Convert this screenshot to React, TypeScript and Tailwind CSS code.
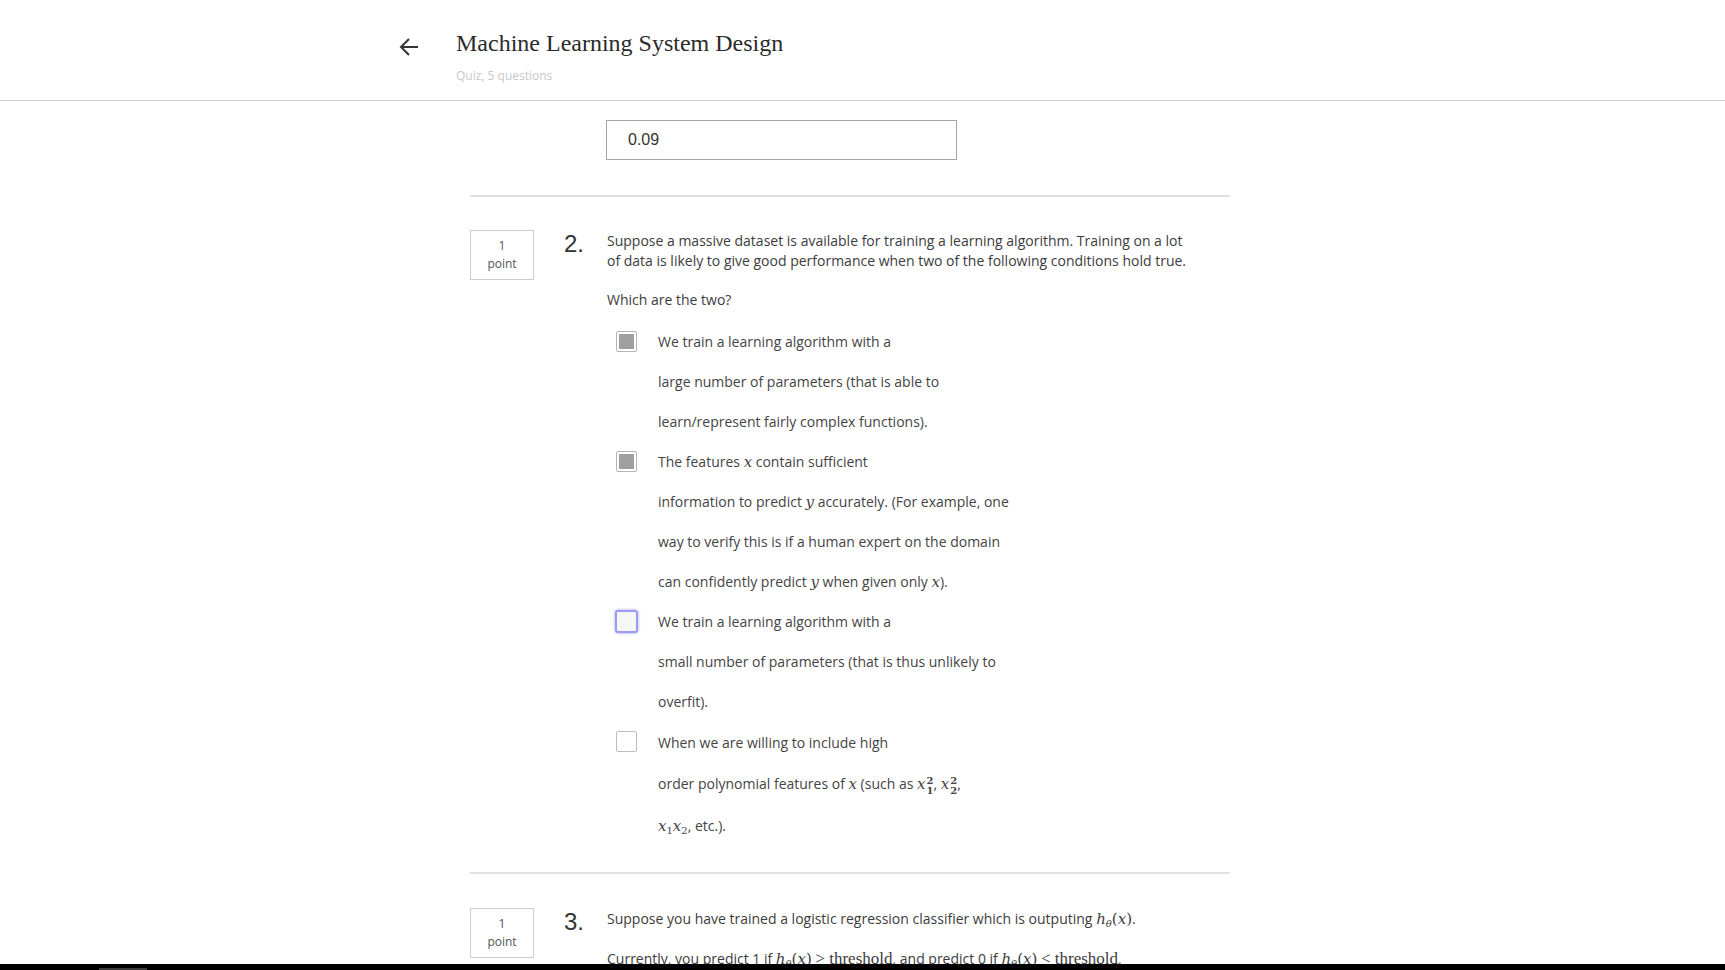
import type { ReactNode } from "react";

const mathFont = "font-['DejaVu_Serif',serif]";

function Tex({ children }: { children: ReactNode }) {
  return <span className={`${mathFont} italic text-[15px] leading-none`}>{children}</span>;
}

function Rm({ children }: { children: ReactNode }) {
  return <span className="font-['Liberation_Serif',serif] text-[17px] leading-none">{children}</span>;
}

function H() {
  return (
    <span className={`${mathFont} text-[15px] leading-none`}>
      <span className="italic">h</span>
      <sub className="italic text-[10px] leading-none">θ</sub>(<span className="italic">x</span>)
    </span>
  );
}

// x with stacked superscript 2 and subscript i
function XSq({ i }: { i: string }) {
  return (
    <span className={`${mathFont} text-[15px] leading-none`}>
      <span className="italic">x</span>
      <span className="inline-flex flex-col align-[5px] text-[10px] leading-[10px] font-bold ml-[1px]">
        <span>2</span>
        <span>{i}</span>
      </span>
    </span>
  );
}

function Checkbox({ state }: { state: "checked" | "focus" | "empty" }) {
  if (state === "checked") {
    return (
      <div className="w-[21px] h-[21px] border border-[#b5b5b5] rounded-[2px] p-[2px] bg-white">
        <div className="w-full h-full bg-[#a0a0a0]" />
      </div>
    );
  }
  if (state === "focus") {
    return (
      <div className="w-[23px] h-[23px] -ml-[1px] -mt-[1px] -mr-[1px] border-2 border-[#9b9bf2] rounded-[3px] bg-[#f6f6f6] shadow-[0_0_3px_rgba(110,110,240,0.7)]" />
    );
  }
  return <div className="w-[21px] h-[21px] border border-[#bdbdbd] rounded-[2px] bg-white" />;
}

function PointBox() {
  return (
    <div className="w-[64px] h-[50px] shrink-0 border border-[#cccccc] pt-[6px] text-center text-[12px] leading-[18px] text-[#555]">
      <div>1</div>
      <div>point</div>
    </div>
  );
}

type Opt = { state: "checked" | "focus" | "empty"; lines: { h?: string; text: ReactNode }[] };

const options: Opt[] = [
  {
    state: "checked",
    lines: [
      { text: "We train a learning algorithm with a" },
      { text: "large number of parameters (that is able to" },
      { text: "learn/represent fairly complex functions)." },
    ],
  },
  {
    state: "checked",
    lines: [
      { text: <>The features <Tex>x</Tex> contain sufficient</> },
      { text: <>information to predict <Tex>y</Tex> accurately. (For example, one</> },
      { text: "way to verify this is if a human expert on the domain" },
      { text: <>can confidently predict <Tex>y</Tex> when given only <Tex>x</Tex>).</> },
    ],
  },
  {
    state: "focus",
    lines: [
      { text: "We train a learning algorithm with a" },
      { text: "small number of parameters (that is thus unlikely to" },
      { text: "overfit)." },
    ],
  },
  {
    state: "empty",
    lines: [
      { h: "h-[42px]", text: "When we are willing to include high" },
      {
        h: "h-[42px]",
        text: (
          <>
            order polynomial features of <Tex>x</Tex> (such as <XSq i="1" />, <XSq i="2" />,
          </>
        ),
      },
      {
        text: (
          <>
            <span className={`${mathFont} text-[15px] leading-none`}>
              <span className="italic">x</span>
              <sub className="text-[10px] leading-none">1</sub>
              <span className="italic">x</span>
              <sub className="text-[10px] leading-none">2</sub>
            </span>
            , etc.).
          </>
        ),
      },
    ],
  },
];

export default function App() {
  return (
    <div className="relative h-[970px] overflow-hidden bg-white font-['Open_Sans',sans-serif]">
      {/* Header */}
      <header className="h-[101px] border-b border-[#cfcfcf] flex items-start pl-[399px]">
        <svg className="mt-[37px]" width="20" height="20" viewBox="0 0 20 20" fill="none" stroke="#333" strokeWidth="2">
          <path d="M19 10H2" />
          <path d="M10 2 2 10l8 8" />
        </svg>
        <div className="ml-[37px] mt-[27px]">
          <h1 className="font-['Liberation_Serif',serif] text-[24px] leading-[32px] text-[#2b2b2b]">
            Machine Learning System Design
          </h1>
          <p className="mt-[9px] text-[12px] leading-[16px] text-[#c8c8c8]">Quiz, 5 questions</p>
        </div>
      </header>

      <div className="ml-[470px] w-[760px] text-[#3c3c3c]">
        {/* end of question 1 */}
        <div className="pl-[136px] pt-[19px]">
          <div className="w-[351px] h-[40px] border border-[#a6a6a6] flex items-center pl-[21px] font-['Liberation_Sans',Arial,sans-serif] text-[16px] text-[#333]">
            0.09
          </div>
        </div>
        <div className="mt-[35px] h-[2px] bg-[#e1e1e1]" />

        {/* Question 2 */}
        <div className="mt-[33px] flex items-start">
          <PointBox />
          <div className="ml-[30px] w-[43px] shrink-0 font-['Liberation_Sans',Arial,sans-serif] text-[24px] leading-[28px] text-[#333]">
            2.
          </div>
          <div className="pt-[1px] text-[14px] leading-[20px]">
            <p className="whitespace-nowrap">
              Suppose a massive dataset is available for training a learning algorithm. Training on a lot
            </p>
            <p className="whitespace-nowrap">
              of data is likely to give good performance when two of the following conditions hold true.
            </p>
            <p className="mt-[19px]">Which are the two?</p>

            <div className="mt-[12px] ml-[9px] text-[#444]">
              {options.map((o, i) => (
                <div key={i} className="flex items-start">
                  <div className="mt-[9px] shrink-0">
                    <Checkbox state={o.state} />
                  </div>
                  <div className="ml-[21px]">
                    {o.lines.map((l, j) => (
                      <div key={j} className={`${l.h ?? "h-[40px]"} flex items-center whitespace-nowrap`}>
                        <span>{l.text}</span>
                      </div>
                    ))}
                  </div>
                </div>
              ))}
            </div>
          </div>
        </div>
        <div className="mt-[26px] h-[2px] bg-[#e1e1e1]" />

        {/* Question 3 */}
        <div className="mt-[34px] flex items-start">
          <PointBox />
          <div className="ml-[30px] w-[43px] shrink-0 font-['Liberation_Sans',Arial,sans-serif] text-[24px] leading-[28px] text-[#333]">
            3.
          </div>
          <div className="pt-[1px] text-[14px] leading-[20px]">
            <p className="whitespace-nowrap">
              Suppose you have trained a logistic regression classifier which is outputing <H />.
            </p>
            <p className="mt-[20px] whitespace-nowrap">
              Currently, you predict 1 if <H /> <Rm>&gt; threshold</Rm>, and predict 0 if <H />{" "}
              <Rm>&lt; threshold</Rm>,
            </p>
          </div>
        </div>
      </div>

      {/* bottom bar */}
      <div className="absolute bottom-0 left-0 right-0 h-[6px] bg-black">
        <div className="ml-[99px] mt-[4px] w-[48px] h-[2px] bg-[#3a3a3a]" />
      </div>
    </div>
  );
}
